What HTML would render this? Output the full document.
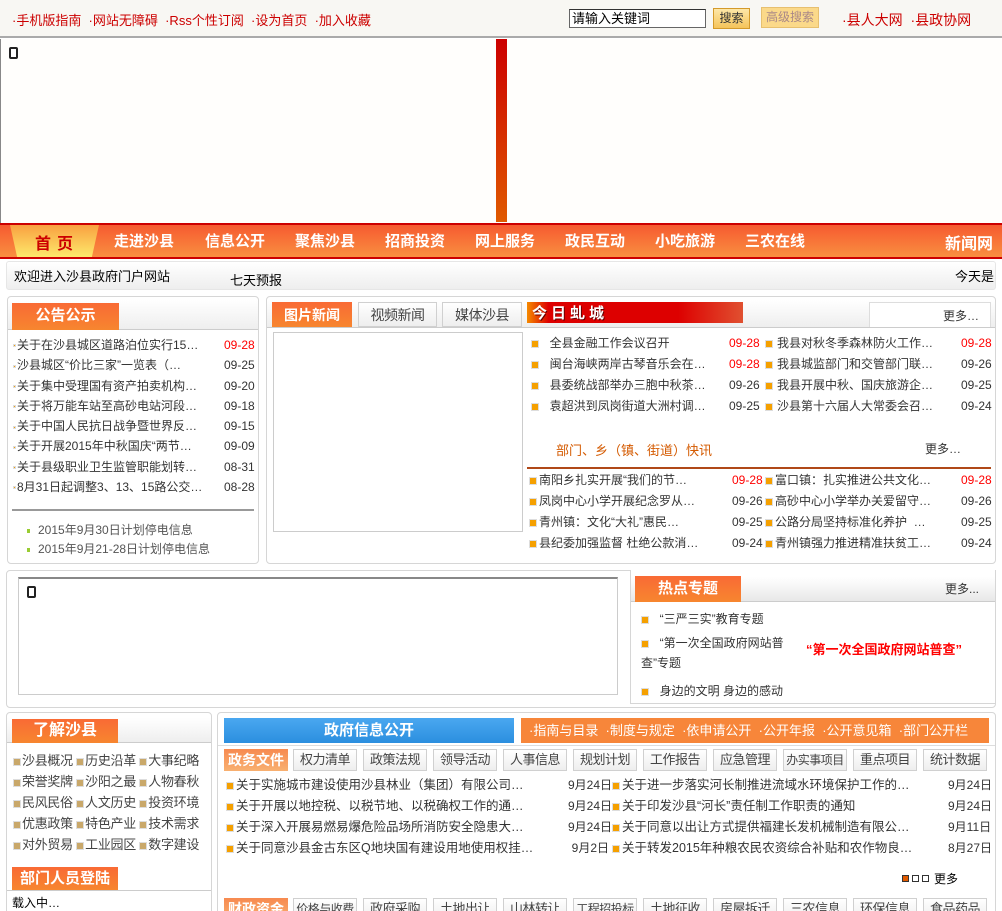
<!DOCTYPE html>
<html><head><meta charset="utf-8">
<style>
*{margin:0;padding:0;box-sizing:border-box}
html,body{width:1002px;height:911px;overflow:hidden}
body{background:#fff;font-family:"Liberation Sans","Noto Sans CJK SC",sans-serif;font-size:12px;color:#333;position:relative}
.a{position:absolute;white-space:nowrap}
.red{color:#c00}
.box{position:absolute;border:1px solid #d6d6d6;border-radius:4px;background:#fff}
.hd{position:absolute;background:linear-gradient(#f96a35,#f7862f);color:#fff;font-size:15px;font-weight:bold;text-align:center;line-height:23px;white-space:nowrap}
.b{display:inline-block;width:8px;height:8px;background:#f5a000;border:1px solid #ddd;vertical-align:middle;margin-right:4px}
.tab{position:absolute;border:1px solid #d0d0d0;background:linear-gradient(#fff,#eee);font-size:13px;text-align:center;line-height:20px;color:#444;white-space:nowrap;overflow:hidden;letter-spacing:-0.5px}
.nv{position:absolute;top:230px;font-size:15px;font-weight:bold;color:#fff;white-space:nowrap}
</style></head><body>
<!-- top bar -->
<div class="a" style="left:0;top:0;width:1002px;height:38px;background:#f8f7f3;border-bottom:2px solid #aaa"></div>
<div class="a red" style="left:12px;top:10px;font-size:13px">·手机版指南 &nbsp;·网站无障碍 &nbsp;·Rss个性订阅 &nbsp;·设为首页 &nbsp;·加入收藏</div>
<div class="a" style="left:569px;top:9px;width:137px;height:19px;border:1px solid #666;border-top-color:#333;background:#fff;font-size:13px;line-height:17px;padding-left:2px;color:#000">请输入关键词</div>
<div class="a" style="left:713px;top:8px;width:37px;height:21px;background:linear-gradient(#fde7a8,#f5c45a);border:1px solid #d49a2a;font-size:12px;text-align:center;line-height:19px;color:#333">搜索</div>
<div class="a" style="left:761px;top:7px;width:58px;height:21px;background:#fbd98a;border:1px solid #e7c070;font-size:12px;text-align:center;line-height:19px;color:#a88">高级搜索</div>
<div class="a red" style="left:842px;top:10px;font-size:14px">·县人大网 &nbsp;·县政协网</div>
<!-- banner -->
<div class="a" style="left:0;top:39px;width:1002px;height:184px;background:#fffefc;border-left:1px solid #888"></div>
<div class="a" style="left:496px;top:39px;width:11px;height:183px;background:linear-gradient(#c00,#e05a00)"></div>
<div class="a" style="left:9px;top:47px;width:9px;height:12px;border:2px solid #222;border-radius:2px;background:#fff"></div>
<!-- nav -->
<div class="a" style="left:0;top:223px;width:1002px;height:36px;border-top:2px solid #c00;border-bottom:2px solid #c00;background:linear-gradient(#f65a30,#f98f40)"></div>
<div class="a" style="left:10px;top:225px;width:89px;height:32px;background:linear-gradient(#f9a040,#fde96b);clip-path:polygon(0 0,100% 0,92% 100%,8% 100%)"></div>
<div class="a" style="left:35px;top:230px;font-size:16px;font-weight:bold;color:#c00;letter-spacing:6px">首页</div>
<div class="nv" style="left:114px">走进沙县</div>
<div class="nv" style="left:205px">信息公开</div>
<div class="nv" style="left:295px">聚焦沙县</div>
<div class="nv" style="left:385px">招商投资</div>
<div class="nv" style="left:475px">网上服务</div>
<div class="nv" style="left:565px">政民互动</div>
<div class="nv" style="left:655px">小吃旅游</div>
<div class="nv" style="left:745px">三农在线</div>
<div class="nv" style="left:945px;font-size:16px">新闻网</div>
<div class="a" style="left:6px;top:261px;width:990px;height:29px;background:linear-gradient(#fff,#eee);border:1px solid #e6e6e6;border-radius:3px"></div>
<div class="a" style="left:14px;top:266px;font-size:13px;color:#000">欢迎进入沙县政府门户网站</div>
<div class="a" style="left:230px;top:270px;font-size:13px;color:#000">七天预报</div>
<div class="a" style="left:955px;top:266px;font-size:13px;color:#000">今天是</div>
<!-- notice box -->
<div class="box" style="left:7px;top:296px;width:252px;height:268px"></div>
<div class="a" style="left:8px;top:300px;width:250px;height:30px;background:linear-gradient(#fff,#eee);border-bottom:1px solid #ccc"></div>
<div class="hd" style="left:12px;top:303px;width:107px;height:27px;line-height:26px">公告公示</div>
<div class="a" style="left:13px;top:335px;line-height:20.3px;font-size:12px">
<div><span class="b" style="width:3px;height:3px;margin-right:1px"></span>关于在沙县城区道路泊位实行15…</div>
<div><span class="b" style="width:3px;height:3px;margin-right:1px"></span>沙县城区“价比三家”一览表（…</div>
<div><span class="b" style="width:3px;height:3px;margin-right:1px"></span>关于集中受理国有资产拍卖机构…</div>
<div><span class="b" style="width:3px;height:3px;margin-right:1px"></span>关于将万能车站至高砂电站河段…</div>
<div><span class="b" style="width:3px;height:3px;margin-right:1px"></span>关于中国人民抗日战争暨世界反…</div>
<div><span class="b" style="width:3px;height:3px;margin-right:1px"></span>关于开展2015年中秋国庆“两节…</div>
<div><span class="b" style="width:3px;height:3px;margin-right:1px"></span>关于县级职业卫生监管职能划转…</div>
<div><span class="b" style="width:3px;height:3px;margin-right:1px"></span>8月31日起调整3、13、15路公交…</div></div>
<div class="a" style="left:224px;top:335px;line-height:20.3px"><div style="color:#f00">09-28</div><div>09-25</div><div>09-20</div><div>09-18</div><div>09-15</div><div>09-09</div><div>08-31</div><div>08-28</div></div>
<div class="a" style="left:12px;top:509px;width:242px;height:2px;background:#999"></div>
<div class="a" style="left:27px;top:521px;line-height:19px;color:#555"><div><span class="b" style="width:3px;height:4px;background:#9c3;border:0;margin-right:8px"></span>2015年9月30日计划停电信息</div><div><span class="b" style="width:3px;height:4px;background:#9c3;border:0;margin-right:8px"></span>2015年9月21-28日计划停电信息</div></div>
<!-- news box -->
<div class="box" style="left:266px;top:296px;width:730px;height:268px"></div>
<div class="a" style="left:267px;top:300px;width:728px;height:28px;background:linear-gradient(#fff,#eee);border-bottom:1px solid #ccc"></div>
<div class="hd" style="left:272px;top:302px;width:80px;height:25px;font-size:14px;line-height:26px">图片新闻</div>
<div class="tab" style="left:358px;top:302px;width:79px;height:25px;line-height:24px;font-size:14px">视频新闻</div>
<div class="tab" style="left:442px;top:302px;width:80px;height:25px;line-height:24px;font-size:14px">媒体沙县</div>
<div class="a" style="left:527px;top:302px;width:216px;height:21px;background:linear-gradient(90deg,#f58a00,#d00 10%,#d00 70%,#e05030)"></div>
<div class="a" style="left:532px;top:302px;color:#fff;font-size:15px;font-weight:bold;letter-spacing:4px;text-shadow:1px 1px #600">今日虬城</div>
<div class="a" style="left:869px;top:302px;width:122px;height:25px;background:#fff;border:1px solid #ddd;border-bottom:0"></div>
<div class="a" style="left:943px;top:307px;font-size:12px">更多…</div>
<div class="a" style="left:273px;top:332px;width:250px;height:200px;border:1px solid #ccc"></div>
<div class="a" style="left:531px;top:333px;line-height:21px">
<div><span class="b"></span>&nbsp;&nbsp;全县金融工作会议召开</div><div><span class="b"></span>&nbsp;&nbsp;闽台海峡两岸古琴音乐会在…</div><div><span class="b"></span>&nbsp;&nbsp;县委统战部举办三胞中秋茶…</div><div><span class="b"></span>&nbsp;&nbsp;袁超洪到凤岗街道大洲村调…</div></div>
<div class="a" style="left:729px;top:333px;line-height:21px"><div style="color:#f00">09-28</div><div style="color:#f00">09-28</div><div>09-26</div><div>09-25</div></div>
<div class="a" style="left:765px;top:333px;line-height:21px">
<div><span class="b"></span>我县对秋冬季森林防火工作…</div><div><span class="b"></span>我县城监部门和交管部门联…</div><div><span class="b"></span>我县开展中秋、国庆旅游企…</div><div><span class="b"></span>沙县第十六届人大常委会召…</div></div>
<div class="a" style="left:961px;top:333px;line-height:21px"><div style="color:#f00">09-28</div><div>09-26</div><div>09-25</div><div>09-24</div></div>
<div class="a" style="left:556px;top:440px;color:#d45a00;font-size:13px">部门、乡（镇、街道）快讯</div>
<div class="a" style="left:925px;top:440px">更多…</div>
<div class="a" style="left:527px;top:467px;width:464px;height:2px;background:#b04818"></div>
<div class="a" style="left:529px;top:470px;line-height:21px">
<div><span class="b" style="margin-right:2px"></span>南阳乡扎实开展“我们的节…</div><div><span class="b" style="margin-right:2px"></span>凤岗中心小学开展纪念罗从…</div><div><span class="b" style="margin-right:2px"></span>青州镇：文化“大礼”惠民…</div><div><span class="b" style="margin-right:2px"></span>县纪委加强监督 杜绝公款消…</div></div>
<div class="a" style="left:732px;top:470px;line-height:21px"><div style="color:#f00">09-28</div><div>09-26</div><div>09-25</div><div>09-24</div></div>
<div class="a" style="left:765px;top:470px;line-height:21px">
<div><span class="b" style="margin-right:2px"></span>富口镇：扎实推进公共文化…</div><div><span class="b" style="margin-right:2px"></span>高砂中心小学举办关爱留守…</div><div><span class="b" style="margin-right:2px"></span>公路分局坚持标准化养护 &nbsp;…</div><div><span class="b" style="margin-right:2px"></span>青州镇强力推进精准扶贫工…</div></div>
<div class="a" style="left:961px;top:470px;line-height:21px"><div style="color:#f00">09-28</div><div>09-26</div><div>09-25</div><div>09-24</div></div>
<!-- box 3 -->
<div class="box" style="left:6px;top:570px;width:990px;height:138px"></div>
<div class="a" style="left:18px;top:577px;width:600px;height:118px;border:1px solid #ccc;border-top:2px solid #888"></div>
<div class="a" style="left:27px;top:586px;width:9px;height:12px;border:2px solid #222;border-radius:2px"></div>
<div class="a" style="left:630px;top:570px;width:366px;height:134px;background:#fff;border:1px solid #d6d6d6;border-top:0"></div>
<div class="a" style="left:631px;top:577px;width:364px;height:25px;background:linear-gradient(#fff,#e8e8e8);border-bottom:1px solid #ccc"></div>
<div class="hd" style="left:635px;top:576px;width:106px;height:26px;line-height:25px">热点专题</div>
<div class="a" style="left:945px;top:580px">更多...</div>
<div class="a" style="left:641px;top:609px;line-height:20px;font-size:12px">
<div><span class="b"></span>&nbsp;&nbsp;“三严三实”教育专题</div>
<div style="margin-top:4px"><span class="b"></span>&nbsp;&nbsp;“第一次全国政府网站普</div><div>查”专题</div>
<div style="margin-top:8px"><span class="b"></span>&nbsp;&nbsp;身边的文明 身边的感动</div></div>
<div class="a" style="left:806px;top:639px;color:#f00;font-weight:bold;font-size:13px">“第一次全国政府网站普查”</div>
<!-- box 4 left -->
<div class="box" style="left:6px;top:712px;width:206px;height:210px"></div>
<div class="a" style="left:7px;top:718px;width:204px;height:25px;background:linear-gradient(#fff,#eee);border-bottom:1px solid #ccc"></div>
<div class="hd" style="left:12px;top:719px;width:106px;height:24px;font-size:16px">了解沙县</div>
<div class="a" style="left:13px;top:750px;line-height:21px;font-size:13px;color:#444;letter-spacing:-0.3px">
<div><span class="b" style="background:#c9a86a;margin-right:1px"></span>沙县概况 <span class="b" style="background:#c9a86a;margin-right:1px"></span>历史沿革 <span class="b" style="background:#c9a86a;margin-right:1px"></span>大事纪略</div>
<div><span class="b" style="background:#c9a86a;margin-right:1px"></span>荣誉奖牌 <span class="b" style="background:#c9a86a;margin-right:1px"></span>沙阳之最 <span class="b" style="background:#c9a86a;margin-right:1px"></span>人物春秋</div>
<div><span class="b" style="background:#c9a86a;margin-right:1px"></span>民风民俗 <span class="b" style="background:#c9a86a;margin-right:1px"></span>人文历史 <span class="b" style="background:#c9a86a;margin-right:1px"></span>投资环境</div>
<div><span class="b" style="background:#c9a86a;margin-right:1px"></span>优惠政策 <span class="b" style="background:#c9a86a;margin-right:1px"></span>特色产业 <span class="b" style="background:#c9a86a;margin-right:1px"></span>技术需求</div>
<div><span class="b" style="background:#c9a86a;margin-right:1px"></span>对外贸易 <span class="b" style="background:#c9a86a;margin-right:1px"></span>工业园区 <span class="b" style="background:#c9a86a;margin-right:1px"></span>数字建设</div></div>
<div class="a" style="left:7px;top:890px;width:204px;height:1px;background:#ccc"></div>
<div class="hd" style="left:12px;top:867px;width:106px;height:23px">部门人员登陆</div>
<div class="a" style="left:12px;top:894px;color:#000">载入中…</div>
<!-- box 4 right -->
<div class="box" style="left:217px;top:712px;width:779px;height:210px"></div>
<div class="a" style="left:224px;top:718px;width:290px;height:25px;background:linear-gradient(#4aa8f0,#2b8fdf);color:#fff;font-size:15px;font-weight:bold;text-align:center;line-height:25px">政府信息公开</div>
<div class="a" style="left:521px;top:718px;width:468px;height:25px;background:#f7863a;color:#fff;font-size:13px;line-height:25px;padding-left:8px">·指南与目录 &nbsp;·制度与规定 &nbsp;·依申请公开 &nbsp;·公开年报 &nbsp;·公开意见箱 &nbsp;·部门公开栏</div>
<div class="a" style="left:218px;top:745px;width:777px;height:1px;background:#ddd"></div>
<div class="hd" style="left:224px;top:749px;width:64px;height:22px;line-height:22px;font-size:14px;background:linear-gradient(#f78a50,#f8b070)">政务文件</div>
<div class="tab" style="left:293px;top:749px;width:64px;height:22px">权力清单</div>
<div class="tab" style="left:363px;top:749px;width:64px;height:22px">政策法规</div>
<div class="tab" style="left:433px;top:749px;width:64px;height:22px">领导活动</div>
<div class="tab" style="left:503px;top:749px;width:64px;height:22px">人事信息</div>
<div class="tab" style="left:573px;top:749px;width:64px;height:22px">规划计划</div>
<div class="tab" style="left:643px;top:749px;width:64px;height:22px">工作报告</div>
<div class="tab" style="left:713px;top:749px;width:64px;height:22px">应急管理</div>
<div class="tab" style="left:783px;top:749px;width:64px;height:22px;font-size:12px">办实事项目</div>
<div class="tab" style="left:853px;top:749px;width:64px;height:22px">重点项目</div>
<div class="tab" style="left:923px;top:749px;width:64px;height:22px">统计数据</div>
<div class="a" style="left:226px;top:775px;line-height:21px;font-size:12.5px">
<div><span class="b" style="margin-right:2px"></span>关于实施城市建设使用沙县林业（集团）有限公司…</div><div><span class="b" style="margin-right:2px"></span>关于开展以地控税、以税节地、以税确权工作的通…</div><div><span class="b" style="margin-right:2px"></span>关于深入开展易燃易爆危险品场所消防安全隐患大…</div><div><span class="b" style="margin-right:2px"></span>关于同意沙县金古东区Q地块国有建设用地使用权挂…</div></div>
<div class="a" style="left:568px;top:775px;line-height:21px;text-align:right;width:41px"><div>9月24日</div><div>9月24日</div><div>9月24日</div><div>9月2日</div></div>
<div class="a" style="left:612px;top:775px;line-height:21px;font-size:12.5px">
<div><span class="b" style="margin-right:2px"></span>关于进一步落实河长制推进流域水环境保护工作的…</div><div><span class="b" style="margin-right:2px"></span>关于印发沙县“河长”责任制工作职责的通知</div><div><span class="b" style="margin-right:2px"></span>关于同意以出让方式提供福建长发机械制造有限公…</div><div><span class="b" style="margin-right:2px"></span>关于转发2015年种粮农民农资综合补贴和农作物良…</div></div>
<div class="a" style="left:948px;top:775px;line-height:21px;text-align:right;width:41px"><div>9月24日</div><div>9月24日</div><div>9月11日</div><div>8月27日</div></div>
<div class="a" style="left:902px;top:875px;width:7px;height:7px;background:#e05a00;border:1px solid #333"></div>
<div class="a" style="left:912px;top:875px;width:7px;height:7px;border:1px solid #333"></div>
<div class="a" style="left:922px;top:875px;width:7px;height:7px;border:1px solid #333"></div>
<div class="a" style="left:934px;top:870px;color:#000">更多</div>
<div class="hd" style="left:224px;top:898px;width:64px;height:22px;line-height:22px;font-size:14px;background:linear-gradient(#f78a50,#f8b070)">财政资金</div>
<div class="tab" style="left:293px;top:898px;width:64px;height:22px;font-size:12px">价格与收费</div>
<div class="tab" style="left:363px;top:898px;width:64px;height:22px">政府采购</div>
<div class="tab" style="left:433px;top:898px;width:64px;height:22px">土地出让</div>
<div class="tab" style="left:503px;top:898px;width:64px;height:22px">山林转让</div>
<div class="tab" style="left:573px;top:898px;width:64px;height:22px;font-size:12px">工程招投标</div>
<div class="tab" style="left:643px;top:898px;width:64px;height:22px">土地征收</div>
<div class="tab" style="left:713px;top:898px;width:64px;height:22px">房屋拆迁</div>
<div class="tab" style="left:783px;top:898px;width:64px;height:22px">三农信息</div>
<div class="tab" style="left:853px;top:898px;width:64px;height:22px">环保信息</div>
<div class="tab" style="left:923px;top:898px;width:64px;height:22px">食品药品</div>
</body></html>
